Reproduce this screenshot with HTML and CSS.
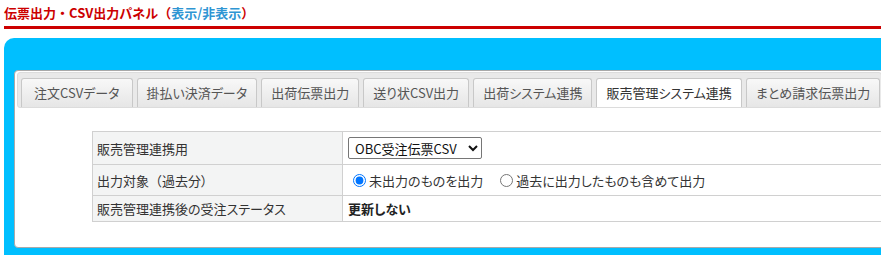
FILE: index.html
```html
<!DOCTYPE html>
<html lang="ja">
<head>
  <meta charset="UTF-8" />
  <meta name="viewport" content="width=device-width, initial-scale=1" />
  <title>伝票出力・CSV出力パネル</title>
  <link rel="stylesheet" href="styles.css">
</head>
<body>
  <div class="page">
    <h2 class="panel-title">伝票出力・CSV出力パネル（<a href="#" class="toggle">表示/非表示</a>）</h2>

    <div class="blue-box">
      <div class="tabs">
        <ul class="tab-nav">
          <li class="tab">注文CSVデータ</li>
          <li class="tab">掛払い決済データ</li>
          <li class="tab">出荷伝票出力</li>
          <li class="tab">送り状CSV出力</li>
          <li class="tab">出荷システム連携</li>
          <li class="tab active">販売管理システム連携</li>
          <li class="tab">まとめ請求伝票出力</li>
        </ul>

        <div class="tab-panel">
          <table class="settings">
            <tr>
              <th>販売管理連携用</th>
              <td>
                <select class="format">
                  <option>OBC受注伝票CSV</option>
                </select>
              </td>
            </tr>
            <tr>
              <th>出力対象<span class="paren">（</span>過去分）</th>
              <td>
                <label class="opt"><input type="radio" name="target" checked />未出力のものを出力</label>
                <label class="opt"><input type="radio" name="target" />過去に出力したものも含めて出力</label>
              </td>
            </tr>
            <tr>
              <th>販売管理連携後の受注ステータス</th>
              <td class="strong">更新しない</td>
            </tr>
          </table>
        </div>
      </div>
    </div>
  </div>
</body>
</html>
```

FILE: styles.css
```css
html, body {
  overflow: hidden;
}
body {
  margin: 0;
  font-family: "Noto Sans CJK JP", sans-serif;
  font-size: 13px;
  color: #333;
  background: #fff;
  font-feature-settings: "palt";
}
.page {
  padding-left: 4px;
  width: 1000px;
}
.panel-title {
  margin: 0;
  padding: 3px 0 3px;
  font-size: 13px;
  line-height: 20px;
  font-weight: bold;
  color: #cc0000;
  border-bottom: 3px solid #cc0000;
  font-feature-settings: normal;
}
.toggle {
  color: #2e95d3;
  text-decoration: none;
}
.blue-box {
  margin-top: 9px;
  background: #00bfff;
  border-top-left-radius: 10px;
  padding: 32px 0 20px 10px;
}
.tabs {
  background: #fff;
  border: 1px solid #a9a9a9;
  border-radius: 4px 0 0 4px;
  padding: 1px 2px 0;
}
.tab-nav {
  list-style: none;
  margin: 0;
  padding: 5px 3px 0;
  display: flex;
  background: #e9e9e9;
  border: 1px solid #dcdcdc;
  border-radius: 3px;
  width: 857px;
  overflow: hidden;
}
.tab {
  flex-shrink: 0;
  white-space: nowrap;
  margin-right: 4px;
  margin-bottom: -1px;
  padding: 0 9px;
  height: 28px;
  line-height: 27px;
  color: #555;
  background: linear-gradient(#f8f8f8, #e6e6e6);
  border: 1px solid #c8c8c8;
  border-bottom: 0;
  border-radius: 3px 3px 0 0;
}
.tab:first-child {
  padding: 0 12px;
}
.tab.active {
  background: #fff;
  color: #333;
  height: 29px;
}
.tab-panel {
  padding: 23px 0 25px 75px;
}
.settings {
  border-collapse: collapse;
  width: 900px;
}
.settings th,
.settings td {
  border: 1px solid #d0d0d0;
  padding: 5px 5px;
  line-height: 15px;
  text-align: left;
  vertical-align: middle;
}
.settings th {
  width: 240px;
  font-weight: normal;
  background: #f3f4f4;
  color: #333;
  padding-left: 4px;
}
.paren {
  font-feature-settings: normal;
}
.settings td {
  color: #222;
}
.format {
  width: 134px;
  height: 22px;
  font-family: inherit;
  font-size: 13px;
  color: #111;
  border: 1px solid #767676;
  border-radius: 2px;
  background: #fff;
  padding: 0 2px;
}
.opt {
  display: inline-flex;
  align-items: center;
  height: 20px;
  margin-right: 9px;
  color: #333;
}
.opt input {
  margin: 0 3px 0 5px;
  width: 13px;
  height: 13px;
}
.strong {
  font-weight: bold;
}
```
